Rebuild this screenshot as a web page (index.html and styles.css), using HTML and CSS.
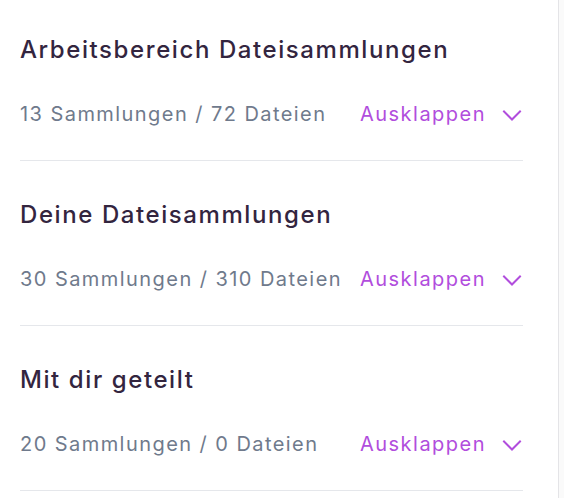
FILE: index.html
```html
<!DOCTYPE html>
<html lang="de">
<head>
<meta charset="utf-8">
<link rel="stylesheet" href="styles.css">
</head>
<body>
<div class="panel">
  <section class="group">
    <h2 class="group-title">Arbeitsbereich Dateisammlungen</h2>
    <div class="group-row">
      <span class="group-stats">13 Sammlungen / 72 Dateien</span>
      <button class="expand" type="button">
        <span class="expand-label">Ausklappen</span>
        <svg class="chevron" width="21" height="20" viewBox="0 0 21 20" aria-hidden="true"><path d="M2 7.5 L10 15.5 L18 7.5" fill="none" stroke="currentColor" stroke-width="2" stroke-linecap="square"/></svg>
      </button>
    </div>
  </section>
  <section class="group">
    <h2 class="group-title">Deine Dateisammlungen</h2>
    <div class="group-row">
      <span class="group-stats">30 Sammlungen / 310 Dateien</span>
      <button class="expand" type="button">
        <span class="expand-label">Ausklappen</span>
        <svg class="chevron" width="21" height="20" viewBox="0 0 21 20" aria-hidden="true"><path d="M2 7.5 L10 15.5 L18 7.5" fill="none" stroke="currentColor" stroke-width="2" stroke-linecap="square"/></svg>
      </button>
    </div>
  </section>
  <section class="group">
    <h2 class="group-title">Mit dir geteilt</h2>
    <div class="group-row">
      <span class="group-stats">20 Sammlungen / 0 Dateien</span>
      <button class="expand" type="button">
        <span class="expand-label">Ausklappen</span>
        <svg class="chevron" width="21" height="20" viewBox="0 0 21 20" aria-hidden="true"><path d="M2 7.5 L10 15.5 L18 7.5" fill="none" stroke="currentColor" stroke-width="2" stroke-linecap="square"/></svg>
      </button>
    </div>
  </section>
</div>
</body>
</html>
```
FILE: styles.css
```css
* { box-sizing: border-box; }
html, body { margin: 0; padding: 0; }
body {
  background: #fafafa;
  font-family: "Inter", "Noto Sans", sans-serif;
  height: 498px;
  overflow: hidden;
}
.panel {
  width: 559px;
  min-height: 498px;
  background: #ffffff;
  border-right: 1px solid #e4e4e7;
  padding: 0 35px 0 20px;
}
.group {
  padding: 38px 0 32px;
  border-bottom: 1px solid #e5e7eb;
}
.group:first-child { padding-top: 34px; }
.group-title {
  margin: 0;
  font-size: 24px;
  line-height: 32px;
  font-weight: 500;
  letter-spacing: 0.066em;
  color: #33253f;
}
.group-row {
  margin-top: 34px;
  height: 28px;
  display: flex;
  align-items: center;
  justify-content: space-between;
}
.group-stats {
  font-size: 20px;
  line-height: 28px;
  letter-spacing: 0.072em;
  color: #6f7a8c;
}
.expand {
  display: flex;
  align-items: center;
  gap: 16px;
  border: 0;
  background: none;
  padding: 0;
  font: inherit;
  color: #b14ddd;
  cursor: pointer;
}
.expand-label {
  font-size: 20px;
  line-height: 28px;
  letter-spacing: 0.074em;
}
.chevron { display: block; }
```
